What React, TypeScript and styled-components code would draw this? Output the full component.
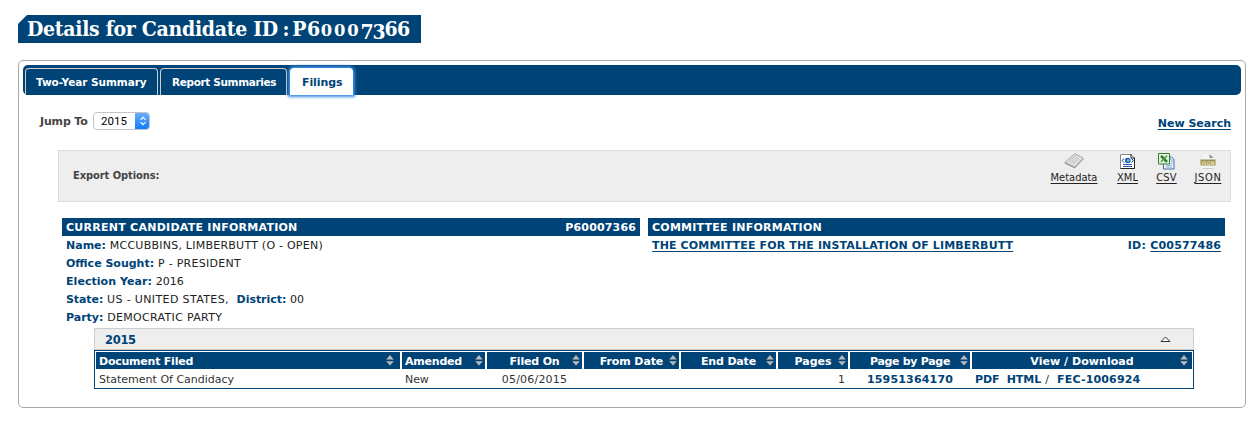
import React from "react";
import styled, { createGlobalStyle } from "styled-components";

const navy = "#004377";

const GlobalStyle = createGlobalStyle`
  * { box-sizing: border-box; }
  body { margin: 0; background: #fff; font: 11px/20px "DejaVu Sans", Verdana, sans-serif; color: #222; }
`;

const Page = styled.main`
  width: 1259px;
  height: 424px;
  padding: 15px 13px 0 18px;
  overflow: hidden;
`;

const Text = styled.span<{ $ls?: number }>`
  white-space: pre;
  letter-spacing: ${(p) => p.$ls ?? 0}px;
`;

const Title = styled.h1`
  width: 403px;
  height: 28px;
  margin: 0;
  padding-left: 9px;
  background: ${navy};
  clip-path: polygon(9px 0, 100% 0, 100% 100%, 0 100%, 0 9px);
  color: #fff;
  font: bold 21px/28px "DejaVu Serif Condensed", "DejaVu Serif", Georgia, serif;
  font-stretch: condensed;
  white-space: nowrap;
`;
const LowDigit = styled.span`
  font-family: "DejaVu Serif", Georgia, serif;
  font-size: 0.78em;
  font-stretch: normal;
  letter-spacing: 1.9px;
`;
const DropDigit = styled.span`
  display: inline-block;
  line-height: 1;
  letter-spacing: -1.2px;
  transform: translateY(3px);
`;

const Panel = styled.section`
  width: 1228px;
  height: 348px;
  margin-top: 17px;
  padding: 4px;
  border: 1px solid #aaa;
  border-radius: 5px;
`;

const TabBar = styled.nav`
  display: flex;
  gap: 2px;
  height: 30px;
  padding: 3px 2px 0;
  background: ${navy};
  border-radius: 5px;
`;
const Tab = styled.a<{ $width: number; $active?: boolean }>`
  width: ${(p) => p.$width}px;
  height: 27px;
  border: 1px solid ${(p) => (p.$active ? "#fff" : "#ccc")};
  border-bottom: 0;
  border-radius: 4px 4px 0 0;
  background: ${(p) => (p.$active ? "#fff" : navy)};
  color: ${(p) => (p.$active ? navy : "#fff")};
  font-weight: bold;
  font-size: ${(p) => (p.$active ? 11 : 10.5)}px;
  line-height: 27px;
  padding-left: 11px;
  &:first-child { padding-left: 10px; }
  ${(p) => p.$active && "margin-left: 1px; box-shadow: 0 0 3px 2px #3b8ee0;"}
`;

const Tools = styled.div`
  display: flex;
  align-items: flex-start;
  height: 55px;
  padding: 17px 10px 0 17px;
`;
const JumpLabel = styled.label`
  width: 53px;
  color: #444;
  font-weight: bold;
`;
const Select = styled.div`
  display: flex;
  width: 57px;
  height: 18px;
  border: 1px solid #c4c4c4;
  border-radius: 4px;
  background: #fff;
  overflow: hidden;
`;
const SelectValue = styled.span`
  flex: 1;
  padding-left: 7px;
  color: #000;
  font: 11.5px/17px Roboto, sans-serif;
`;
const Stepper = styled.span`
  display: flex;
  width: 15px;
  height: 18px;
  margin: -1px -1px -1px 0;
  align-items: center;
  justify-content: center;
  background: linear-gradient(#6fb3fb, #0d78fb);
`;
const NewSearch = styled.a`
  margin: 2px 0 0 auto;
  color: ${navy};
  font-weight: bold;
  text-decoration: underline 1px;
  text-underline-offset: 2px;
`;

const ExportBar = styled.div`
  display: flex;
  height: 52px;
  margin: 0 10px 16px 35px;
  padding-left: 14px;
  border: 1px solid #ddd;
  background: #eee;
  font-family: "DejaVu Sans Condensed", Tahoma, sans-serif;
  font-stretch: condensed;
`;
const ExportLabel = styled.b`
  flex: none;
  width: 968px;
  padding-top: 15px;
  color: #444;
`;
const ExportItem = styled.a<{ $width: number }>`
  display: flex;
  flex: none;
  flex-direction: column;
  align-items: center;
  width: ${(p) => p.$width}px;
  padding-top: 1px;
  color: #222;
  line-height: 16px;
  text-decoration: underline 1px;
  text-underline-offset: 2px;
  svg { display: block; }
`;

const InfoColumns = styled.div`
  display: grid;
  grid-template-columns: 578px 577px;
  column-gap: 8px;
  height: 110px;
  margin-left: 39px;
`;
const InfoHead = styled.header`
  display: flex;
  justify-content: space-between;
  height: 18px;
  padding: 0 4px;
  background: ${navy};
  color: #fff;
  font-weight: bold;
`;
const InfoRow = styled.div`
  display: flex;
  height: 18px;
  padding: 0 4px;
  white-space: pre;
`;
const Key = styled(Text)`
  color: ${navy};
  font-weight: bold;
`;
const BoldLink = styled(Key)`
  text-decoration: underline 1px;
  text-underline-offset: 2px;
`;
const Spacer = styled.span`
  flex: 1;
`;

const Filings = styled.div`
  width: 1100px;
  margin-left: 71px;
`;
const YearBar = styled.div`
  display: flex;
  justify-content: space-between;
  height: 22px;
  padding: 0 22px 0 10px;
  border: 1px solid #ccc;
  background: #eee;
  color: ${navy};
  font-weight: bold;
  font-size: 11.5px;
  line-height: 22px;
  svg { margin-top: 7px; }
`;
const Grid = styled.div`
  display: grid;
  grid-template-columns: 304px 83px 95px 95px 95px 70px 120px 220px;
  grid-template-rows: 17px 18px;
  column-gap: 2px;
  height: 39px;
  padding: 1px;
  border: 1px solid ${navy};
`;
const HeadCell = styled.div<{ $left?: boolean; $edge?: number }>`
  position: relative;
  background: ${navy};
  color: #fff;
  font-weight: bold;
  padding-left: ${(p) => (p.$left ? 3 : 0)}px;
  text-align: ${(p) => (p.$left ? "left" : "center")};
  svg { position: absolute; top: 3px; right: ${(p) => p.$edge ?? 2}px; }
`;
const Cell = styled.div<{ $align?: string }>`
  display: flex;
  justify-content: ${(p) => p.$align ?? "flex-start"};
  padding: 1px 3px 0;
  color: #333;
`;

const Sorter = () => (
  <svg width="8" height="11" viewBox="0 0 8 11" fill="#b9b9b9">
    <path d="M4 0 7.8 4.500H.2zM.2 6.200h7.600L4 10.600z" />
  </svg>
);

const MetadataIcon = () => (
  <svg width="20" height="18" viewBox="0 0 20 18">
    <path d="m.8 10.200 9.900 4.800 8.600-8.900v1.400l-8.600 9L.9 11.700z" fill="#a0a0a0" />
    <path d="M.8 10.300 11 1.600l8.300 4.600-8.600 8.900z" fill="#e0e0e0" stroke="#959595" strokeWidth=".8" />
    <path d="m4.500 9.600 6.800-5.800M6.600 10.800l6.700-6M8.700 12l6.500-6.200" stroke="#b4b4b4" strokeWidth=".8" />
  </svg>
);
const XmlIcon = () => (
  <svg width="16" height="18" viewBox="0 0 16 18">
    <path d="M.5 2.500h10.500l3.500 3.500v10.500h-14z" fill="#fff" stroke="#888" />
    <path d="M11 2v4h4M14.500 6v10.500h-14" fill="none" stroke="#222" />
    <path d="M4 6.500 2.200 8.500 4 10.500M11.500 6.500l1.800 2-1.800 2" fill="none" stroke="#0a2a8c" />
    <circle cx="7.800" cy="8.500" r="2.800" fill="#1450b4" />
    <path d="M7 7.200h2l.7 1.300-1.700 1.700-1.300-1.200z" fill="#6fd3c0" />
    <path d="M3 12.500h9M3 14.500h9" stroke="#2a56a8" />
  </svg>
);
const CsvIcon = () => (
  <svg width="17" height="18" viewBox="0 0 17 18">
    <path d="M5.500 4.500h7.500l3 3v9.500H5.500z" fill="#eef5ff" stroke="#4a6a9c" />
    <path d="M12.500 4.500V8H16M8 13.500h6M8 15.200h6M12.500 9.500h2M12.500 11.500h2" fill="none" stroke="#8aa6d0" strokeWidth=".9" />
    <path d="M.5 1.500h11v10.500H.5z" fill="#e3f2dc" stroke="#338038" />
    <path d="m3 3.800 6 6" stroke="#2c7932" strokeWidth="2.400" />
    <path d="M9 3.800 3 9.800" stroke="#4f9a46" strokeWidth="1.600" />
  </svg>
);
const JsonIcon = () => (
  <svg width="16" height="18" viewBox="0 0 16 18">
    <path d="M2.500 2h7.500l3.500 4v11h-11z" fill="#f4f4f4" />
    <path d="M9.500 2v4h4z" fill="#8f8f8f" />
    <path d="M.5 7.500h15v6H.5z" fill="#9c9150" />
    <path d="M2.500 16.500h11" stroke="#ccc" />
    <text x="8" y="12.500" textAnchor="middle" fontSize="5" fontWeight="bold" fill="#e7e0b8" textLength="13">JSON</text>
  </svg>
);

export default function App() {
  return (
    <Page>
      <GlobalStyle />
      <Title>
        <Text $ls={-0.28}>Details for Candidate ID</Text>
        <Text $ls={-1.9}> : </Text>
        <Text $ls={0.5}>P6<LowDigit>000</LowDigit></Text>
        <DropDigit>73</DropDigit>
        <Text $ls={-0.6}>66</Text>
      </Title>
      <Panel>
        <TabBar>
          <Tab $width={133}><Text $ls={-0.05}>Two-Year Summary</Text></Tab>
          <Tab $width={127}><Text $ls={-0.36}>Report Summaries</Text></Tab>
          <Tab $width={63} $active><Text $ls={-0.1}>Filings</Text></Tab>
        </TabBar>
        <Tools>
          <JumpLabel><Text $ls={-0.15}>Jump To</Text></JumpLabel>
          <Select>
            <SelectValue>2015</SelectValue>
            <Stepper>
              <svg width="8" height="10" viewBox="0 0 8 10" fill="none" stroke="#fff" strokeWidth="1.200">
                <path d="m1.500 3.800 2.500-2.500 2.500 2.500M1.500 6.200 4 8.700l2.500-2.500" />
              </svg>
            </Stepper>
          </Select>
          <NewSearch><Text>New Search</Text></NewSearch>
        </Tools>
        <ExportBar>
          <ExportLabel><Text $ls={-0.06}>Export Options:</Text></ExportLabel>
          <ExportItem $width={66}><MetadataIcon /><Text>Metadata</Text></ExportItem>
          <ExportItem $width={41}><XmlIcon /><Text>XML</Text></ExportItem>
          <ExportItem $width={37}><CsvIcon /><Text $ls={0.2}>CSV</Text></ExportItem>
          <ExportItem $width={46}><JsonIcon /><Text $ls={0.6}>JSON</Text></ExportItem>
        </ExportBar>
        <InfoColumns>
          <section>
            <InfoHead><Text $ls={0.26}>CURRENT CANDIDATE INFORMATION</Text><Text $ls={0.15}>P60007366</Text></InfoHead>
            <InfoRow><Key>Name: </Key><Text $ls={0.24}>MCCUBBINS, LIMBERBUTT (O - OPEN)</Text></InfoRow>
            <InfoRow><Key>Office Sought: </Key><Text $ls={0.28}>P - PRESIDENT</Text></InfoRow>
            <InfoRow><Key $ls={0.05}>Election Year: </Key><Text>2016</Text></InfoRow>
            <InfoRow><Key $ls={-0.08}>State: </Key><Text $ls={0.37}>US - UNITED STATES,  </Text><Key $ls={-0.05}>District: </Key><Text>00</Text></InfoRow>
            <InfoRow><Key>Party: </Key><Text $ls={0.31}>DEMOCRATIC PARTY</Text></InfoRow>
          </section>
          <section>
            <InfoHead><Text $ls={0.24}>COMMITTEE INFORMATION</Text></InfoHead>
            <InfoRow>
              <BoldLink $ls={0.14}>THE COMMITTEE FOR THE INSTALLATION OF LIMBERBUTT</BoldLink>
              <Spacer />
              <Key $ls={0.3}>ID: </Key><BoldLink $ls={0.15}>C00577486</BoldLink>
            </InfoRow>
          </section>
        </InfoColumns>
        <Filings>
          <YearBar>
            <Text $ls={-0.3}>2015</Text>
            <svg width="11" height="7" viewBox="0 0 11 7" fill="#fff" stroke="#333"><path d="M1 5.500h9L5.500 1z" /></svg>
          </YearBar>
          <Grid>
            <HeadCell $left $edge={6}><Text $ls={-0.23}>Document Filed</Text><Sorter /></HeadCell>
            <HeadCell $left><Text $ls={-0.21}>Amended</Text><Sorter /></HeadCell>
            <HeadCell><Text $ls={-0.18}>Filed On</Text><Sorter /></HeadCell>
            <HeadCell><Text $ls={-0.1}>From Date</Text><Sorter /></HeadCell>
            <HeadCell><Text $ls={-0.17}>End Date</Text><Sorter /></HeadCell>
            <HeadCell><Text>Pages</Text><Sorter /></HeadCell>
            <HeadCell><Text $ls={-0.3}>Page by Page</Text><Sorter /></HeadCell>
            <HeadCell $edge={4}><Text $ls={0.05}>View / Download</Text><Sorter /></HeadCell>
            <Cell><Text>Statement Of Candidacy</Text></Cell>
            <Cell><Text $ls={-0.1}>New</Text></Cell>
            <Cell $align="center"><Text $ls={0.2}>05/06/2015</Text></Cell>
            <Cell />
            <Cell />
            <Cell $align="flex-end"><Text>1</Text></Cell>
            <Cell $align="center"><Key $ls={0.18}>15951364170</Key></Cell>
            <Cell><Key $ls={-0.15}>PDF  </Key><Key>HTML</Key><Text $ls={0.4}>{" /  "}</Text><Key $ls={0.16}>FEC-1006924</Key></Cell>
          </Grid>
        </Filings>
      </Panel>
    </Page>
  );
}
